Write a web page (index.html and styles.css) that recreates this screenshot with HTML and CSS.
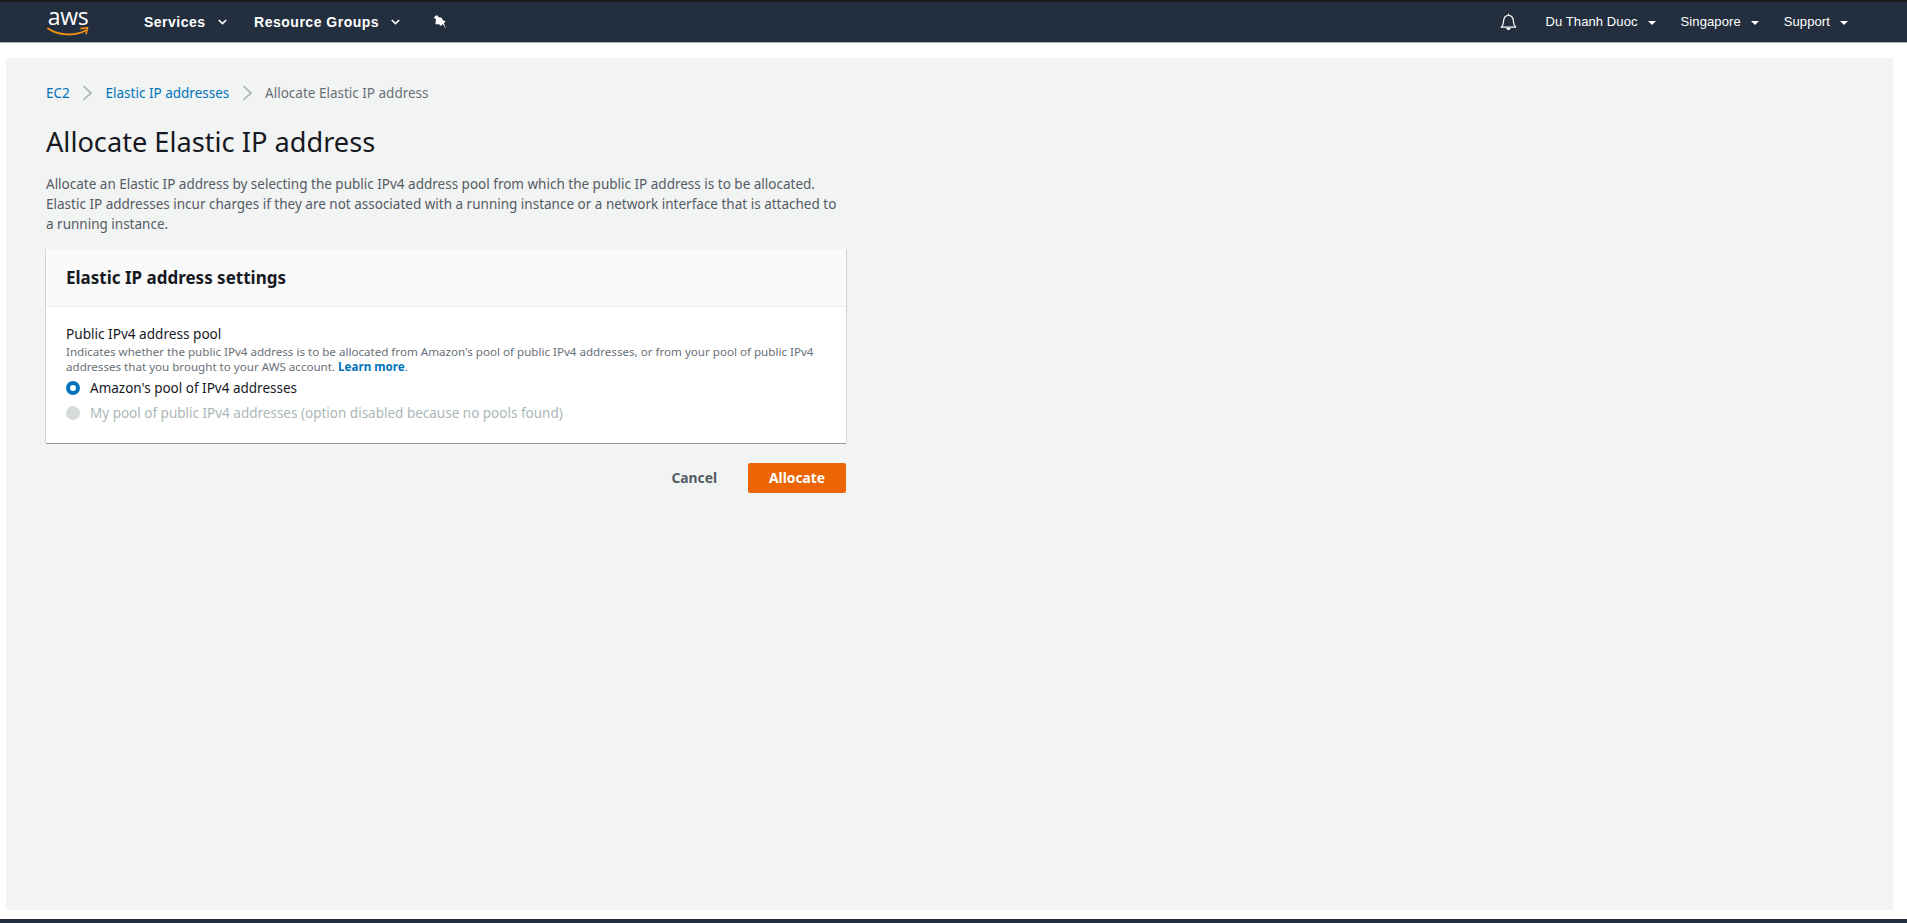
FILE: index.html
```html
<!DOCTYPE html>
<html lang="en">
<head>
<meta charset="utf-8">
<title>Allocate Elastic IP address</title>
<link rel="stylesheet" href="styles.css">
</head>
<body>
<header class="topbar">
  <a class="logo">
    <span class="logo-text">aws</span>
    <svg class="logo-smile" width="42" height="10" viewBox="0 0 42 10"><path d="M1 1.500C11 8.500 28 9.500 38.500 3.500" fill="none" stroke="#f29111" stroke-width="2" stroke-linecap="round"/><path d="M33.500 1.600L40.600 .8L39 7.400" fill="none" stroke="#f29111" stroke-width="1.600" stroke-linejoin="round"/></svg>
  </a>
  <nav class="nav-left">
    <a class="nav-main">Services<svg class="chev" width="9" height="6" viewBox="0 0 9 6"><path d="M.8 1l3.700 3.600L8.200 1" fill="none" stroke="#fff" stroke-width="1.700"/></svg></a>
    <a class="nav-main">Resource Groups<svg class="chev" width="9" height="6" viewBox="0 0 9 6"><path d="M.8 1l3.700 3.600L8.200 1" fill="none" stroke="#fff" stroke-width="1.700"/></svg></a>
    <svg class="pin" width="13" height="14" viewBox="0 0 13 14"><path d="M3.800 0L.8 2.600 3 4.600 2.400 9.300 6 9.200 8 11 9.800 9 13 14 10.900 8.200 12.500 6.500 9.800 5 8.600 2.800 5.800 2.300z" fill="#fff"/></svg>
  </nav>
  <nav class="nav-right">
    <svg class="bell" width="17" height="18" viewBox="0 0 17 18"><path d="M1.200 14.200c1.700-1.500 2.200-3 2.300-5.400C3.700 5.200 5 2.400 8.500 2.400s4.800 2.800 5 6.400c.1 2.400.6 3.900 2.300 5.400z" fill="none" stroke="#fff" stroke-width="1.200" stroke-linejoin="round"/><path d="M8.500 .6v1.800M6.700 15.500c.4 1.500 3.200 1.500 3.600 0z" fill="#fff" stroke="#fff" stroke-width="1"/></svg>
    <a class="nav-small user">Du Thanh Duoc<span class="caret"></span></a>
    <a class="nav-small">Singapore<span class="caret"></span></a>
    <a class="nav-small">Support<span class="caret"></span></a>
  </nav>
</header>
<main class="content">
  <div class="column">
    <ol class="crumbs">
      <li><a class="link">EC2</a></li>
      <li class="sep"><svg width="11" height="16" viewBox="0 0 11 16"><path d="M1.500 1.200L9 8l-7.500 6.800" fill="none" stroke="#aab7b8" stroke-width="1.700"/></svg></li>
      <li><a class="link">Elastic IP addresses</a></li>
      <li class="sep"><svg width="11" height="16" viewBox="0 0 11 16"><path d="M1.500 1.200L9 8l-7.500 6.800" fill="none" stroke="#aab7b8" stroke-width="1.700"/></svg></li>
      <li class="crumb-current">Allocate Elastic IP address</li>
    </ol>
    <h1 class="title">Allocate Elastic IP address</h1>
    <p class="intro">Allocate an Elastic IP address by selecting the public IPv4 address pool from which the public IP address is to be allocated. Elastic IP addresses incur charges if they are not associated with a running instance or a network interface that is attached to a running instance.</p>
    <section class="card">
      <div class="card-head"><h2>Elastic IP address settings</h2></div>
      <div class="card-body">
        <div class="field-label">Public IPv4 address pool</div>
        <div class="field-help">Indicates whether the public IPv4 address is to be allocated from Amazon's pool of public IPv4 addresses, or from your pool of public IPv4 addresses that you brought to your AWS account. <a class="learn">Learn more</a>.</div>
        <div class="radio radio-first"><span class="dot dot-on"></span>Amazon's pool of IPv4 addresses</div>
        <div class="radio radio-off"><span class="dot dot-off"></span>My pool of public IPv4 addresses (option disabled because no pools found)</div>
      </div>
    </section>
    <div class="actions">
      <button class="btn-cancel">Cancel</button>
      <button class="btn-primary">Allocate</button>
    </div>
  </div>
</main>
<footer class="foot"></footer>
</body>
</html>
```
FILE: styles.css
```css
* { box-sizing: border-box; }
html, body { margin: 0; height: 100%; overflow: hidden; }
body {
  display: flex;
  flex-direction: column;
  height: 923px;
  background: #fff;
  font-family: "Noto Sans", sans-serif;
  color: #16191f;
}
.topbar {
  display: flex;
  align-items: center;
  height: 43px;
  flex: none;
  background: #232f3e;
  border-top: 2px solid #1c1c1c;
  border-bottom: 1px solid #aab0b5;
  padding-left: 47px;
  padding-right: 59px;
  color: #fff;
}
.logo { display: flex; flex-direction: column; width: 42px; height: 34px; margin-top: -2px; }
.logo-text { font: 400 23px/24px "Open Sans", sans-serif; letter-spacing: -.3px; text-align: center; }
.logo-smile { display: block; margin-top: -1px; }
.nav-left { display: flex; align-items: center; margin-left: 55px; }
.nav-main { display: flex; align-items: center; font: 700 14px/20px "Liberation Sans", sans-serif; letter-spacing: .5px; margin-right: 27.500px; }
.chev { margin-left: 12px; }
.pin { margin-left: 5px; }
.nav-right { display: flex; align-items: center; margin-left: auto; }
.bell { margin-right: 28px; }
.nav-small { display: flex; align-items: center; font: 400 13px/20px "Liberation Sans", sans-serif; letter-spacing: .1px; margin-left: 25px; }
.nav-small.user { margin-left: 0; }
.caret { width: 0; height: 0; margin-left: 10px; margin-top: 1px; border: 4px solid transparent; border-top: 4px solid #fff; border-bottom: 0; }
.content { flex: 1; margin: 15px 14px 9px 6px; background: #f2f3f3; padding: 25px 40px 0; }
.column { width: 800px; }
.crumbs { list-style: none; display: flex; align-items: center; gap: 12.400px; margin: 0; padding: 0; height: 20px; font-size: 13.500px; line-height: 20px; }
.sep { display: flex; }
.link { color: #0073bb; }
.crumb-current { color: #687078; }
.title { margin: 21px 0 0; font-size: 27.200px; font-weight: 400; line-height: 36px; color: #16191f; }
.intro { margin: 14px 0 0; width: 796px; font-size: 13.500px; line-height: 20px; color: #545b64; }
.card { margin-top: 15px; background: #fff; box-shadow: 0 1px 0 0 #8f999b, 1px 0 0 0 #d0d4d6, -1px 0 0 0 #d0d4d6; }
.card-head { height: 58px; background: #fafafa; border-bottom: 1px solid #eaeded; padding: 17px 20px 0; }
.card-head h2 { margin: 0; font-size: 17px; line-height: 24px; font-weight: 700; color: #16191f; }
.card-body { padding: 17px 20px 18px; }
.field-label { font-size: 13.600px; line-height: 20px; color: #16191f; }
.field-help { font-size: 11.600px; line-height: 15px; color: #687078; }
.learn { color: #0073bb; font-weight: 700; }
.radio { display: flex; align-items: center; height: 25px; font-size: 13.500px; color: #16191f; }
.radio-first { margin-top: 1px; }
.radio-off { color: #aab7b8; }
.dot { flex: none; width: 14px; height: 14px; border-radius: 50%; margin-right: 10px; }
.dot-on { background: #fff; border: 4px solid #0073bb; }
.dot-off { background: #d5dbdb; }
.actions { display: flex; justify-content: flex-end; align-items: center; margin-top: 20px; }
.btn-cancel { border: 0; background: none; padding: 0; margin-right: 31px; font: 700 13.800px/20px "Noto Sans", sans-serif; color: #545b64; }
.btn-primary { width: 98px; height: 30px; border: 0; border-radius: 2px; background-color: #eb6505; padding: 0; font: 700 13.800px/20px "Noto Sans", sans-serif; color: #fff; }
.foot { height: 4px; flex: none; background: #232f3e; }
```
